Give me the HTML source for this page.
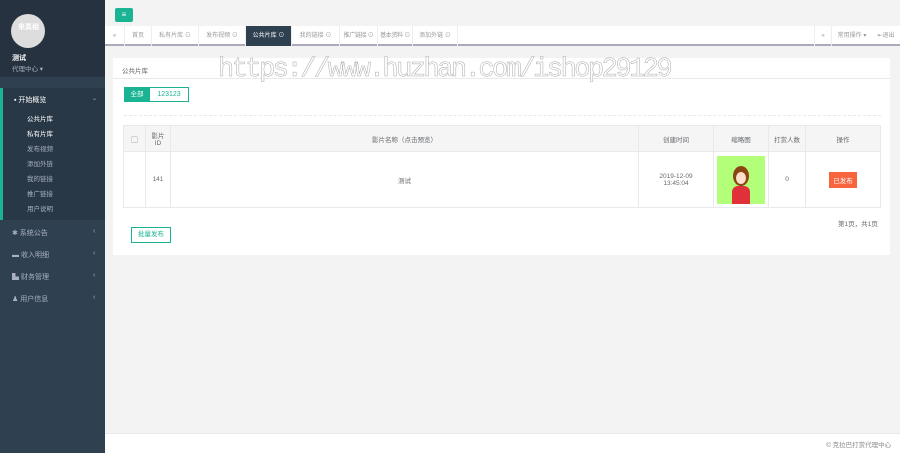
<!DOCTYPE html>
<html><head><meta charset="utf-8"><style>
*{box-sizing:border-box;margin:0;padding:0}
body{width:900px;height:453px;overflow:hidden;background:#f3f3f4;font-family:"Liberation Sans","Noto Sans CJK SC",sans-serif;font-size:7px;color:#676a6c;position:relative}
.abs{position:absolute}
#side{left:0;top:0;width:105px;height:453px;background:#2f4050}
#prof{left:0;top:0;width:105px;height:77px;background:#26323f}
.menu{color:#a7b1c2;font-size:7px}
.sub{position:absolute;left:27px;color:#a7b1c2;font-size:6.5px}
th,td{border:1px solid #e7eaec;text-align:center;font-weight:normal;font-size:6.5px}
th{background:#f5f5f6}
table{border-collapse:collapse;position:absolute;left:123px;top:125px;width:758px}
.tab{position:absolute;top:26px;height:20px;line-height:20px;font-size:6px;color:#999;border-right:1px solid #eee;text-align:center;white-space:nowrap;overflow:hidden}
</style></head><body>
<div id="side" class="abs"></div>
<div id="prof" class="abs"></div>
<div class="abs" style="left:11px;top:14px;width:34px;height:34px;border-radius:50%;background:#ddd"></div>
<div class="abs" style="left:18px;top:22px;color:#fff;font-size:7px;font-weight:bold">来真相</div>
<div class="abs" style="left:12px;top:53px;color:#fff;font-size:7px;font-weight:bold">测试</div>
<div class="abs" style="left:12px;top:63px;color:#a7b1c2;font-size:6.5px">代理中心 ▾</div>
<div class="abs" style="left:0;top:88px;width:105px;height:132px;background:#293846;border-left:3px solid #1ab394"></div>
<div class="abs" style="left:14px;top:95px;color:#fff;font-size:7px">▪ 开始概览</div>
<div class="abs" style="left:92px;top:95px;color:#a7b1c2;font-size:6px">⌄</div>
<div class="sub" style="top:113px;color:#fff">公共片库</div>
<div class="sub" style="top:128px;color:#fff">私有片库</div>
<div class="sub" style="top:143px">发布视频</div>
<div class="sub" style="top:158px">添加外链</div>
<div class="sub" style="top:173px">我的链接</div>
<div class="sub" style="top:188px">推广链接</div>
<div class="sub" style="top:203px">用户说明</div>
<div class="abs menu" style="left:12px;top:228px">✱ 系统公告</div>
<div class="abs menu" style="left:12px;top:250px">▬ 收入明细</div>
<div class="abs menu" style="left:12px;top:272px">▙ 财务管理</div>
<div class="abs menu" style="left:12px;top:294px">♟ 用户信息</div>
<div class="abs menu" style="left:93px;top:228px">‹</div><div class="abs menu" style="left:93px;top:250px">‹</div><div class="abs menu" style="left:93px;top:272px">‹</div><div class="abs menu" style="left:93px;top:294px">‹</div>

<div class="abs" style="left:115px;top:8px;width:18px;height:14px;background:#1ab394;border-radius:2px;color:#fff;font-size:8px;text-align:center;line-height:14px">≡</div>
<div class="abs" style="left:105px;top:26px;width:795px;height:20px;background:#fff;border-bottom:2px solid #aab"></div>
<div class="tab" style="left:105px;width:20px">«</div>
<div class="tab" style="left:125px;width:27px">首页</div>
<div class="tab" style="left:152px;width:47px">私有片库 ⊙</div>
<div class="tab" style="left:199px;width:47px">发布视频 ⊙</div>
<div class="tab" style="left:246px;width:46px;background:#2f4050;color:#fff">公共片库 ⊙</div>
<div class="tab" style="left:292px;width:48px">我的链接 ⊙</div>
<div class="tab" style="left:340px;width:38px;letter-spacing:-0.3px">推广链接 ⊙</div>
<div class="tab" style="left:378px;width:35px;letter-spacing:-0.3px">基本资料 ⊙</div>
<div class="tab" style="left:413px;width:45px">添加外链 ⊙</div>
<div class="tab" style="left:814px;width:18px;border-left:1px solid #eee">»</div>
<div class="tab" style="left:832px;width:40px;border:0">常用操作 ▾</div>
<div class="tab" style="left:872px;width:28px;border:0">⇤退出</div>

<div class="abs" style="left:113px;top:58px;width:777px;height:197px;background:#fff"></div>
<div class="abs" style="left:113px;top:78px;width:777px;height:1px;background:#e7eaec"></div>
<div class="abs" style="left:122px;top:65px;font-size:6.5px">公共片库</div>
<div class="abs" style="left:218px;top:55px;font-family:'Liberation Mono',monospace;font-size:27px;color:#fff;-webkit-text-stroke:0.5px #aaa;letter-spacing:-2.5px">https://www.huzhan.com/ishop29129</div>
<div class="abs" style="left:124px;top:87px;width:26px;height:15px;background:#1ab394;color:#fff;font-size:6.5px;line-height:15px;text-align:center">全部</div>
<div class="abs" style="left:150px;top:87px;width:39px;height:15px;border:1px solid #1ab394;border-left:0;color:#1ab394;font-size:7px;line-height:13px;text-align:center">123123</div>
<div class="abs" style="left:124px;top:115px;width:757px;border-top:1px dashed #e7eaec"></div>
<table>
<tr style="height:26px"><th style="width:22px">▢</th><th style="width:25px">影片<br>ID</th><th style="width:468px">影片名称（点击预览）</th><th style="width:75px">创建时间</th><th style="width:55px">缩略图</th><th style="width:37px">打赏人数</th><th>操作</th></tr>
<tr style="height:56px"><td></td><td>141</td><td>测试</td><td>2019-12-09<br>13:45:04</td><td><div style="width:48px;height:48px;background:#b3ff7a;margin:0 auto;position:relative"><div style="position:absolute;left:16px;top:10px;width:16px;height:20px;border-radius:50%;background:#8b4513"></div><div style="position:absolute;left:19px;top:16px;width:10px;height:12px;border-radius:50%;background:#fde0cc"></div><div style="position:absolute;left:15px;top:30px;width:18px;height:18px;background:#e0303a;border-radius:6px 6px 0 0"></div></div></td><td>0</td><td><span style="display:inline-block;background:#f8653c;color:#fff;padding:3px 4px;font-size:6.5px">已发布</span></td></tr>
</table>
<div class="abs" style="left:838px;top:218px;font-size:6.5px">第1页，共1页</div>
<div class="abs" style="left:131px;top:227px;width:40px;height:16px;border:1px solid #1ab394;color:#1ab394;font-size:6.5px;line-height:14px;text-align:center">批量发布</div>
<div class="abs" style="left:105px;top:433px;width:795px;height:20px;background:#fff;border-top:1px solid #e7eaec"></div>
<div class="abs" style="left:826px;top:439px;font-size:6.5px;color:#888">© 克拉巴打赏代理中心</div>
</body></html>
